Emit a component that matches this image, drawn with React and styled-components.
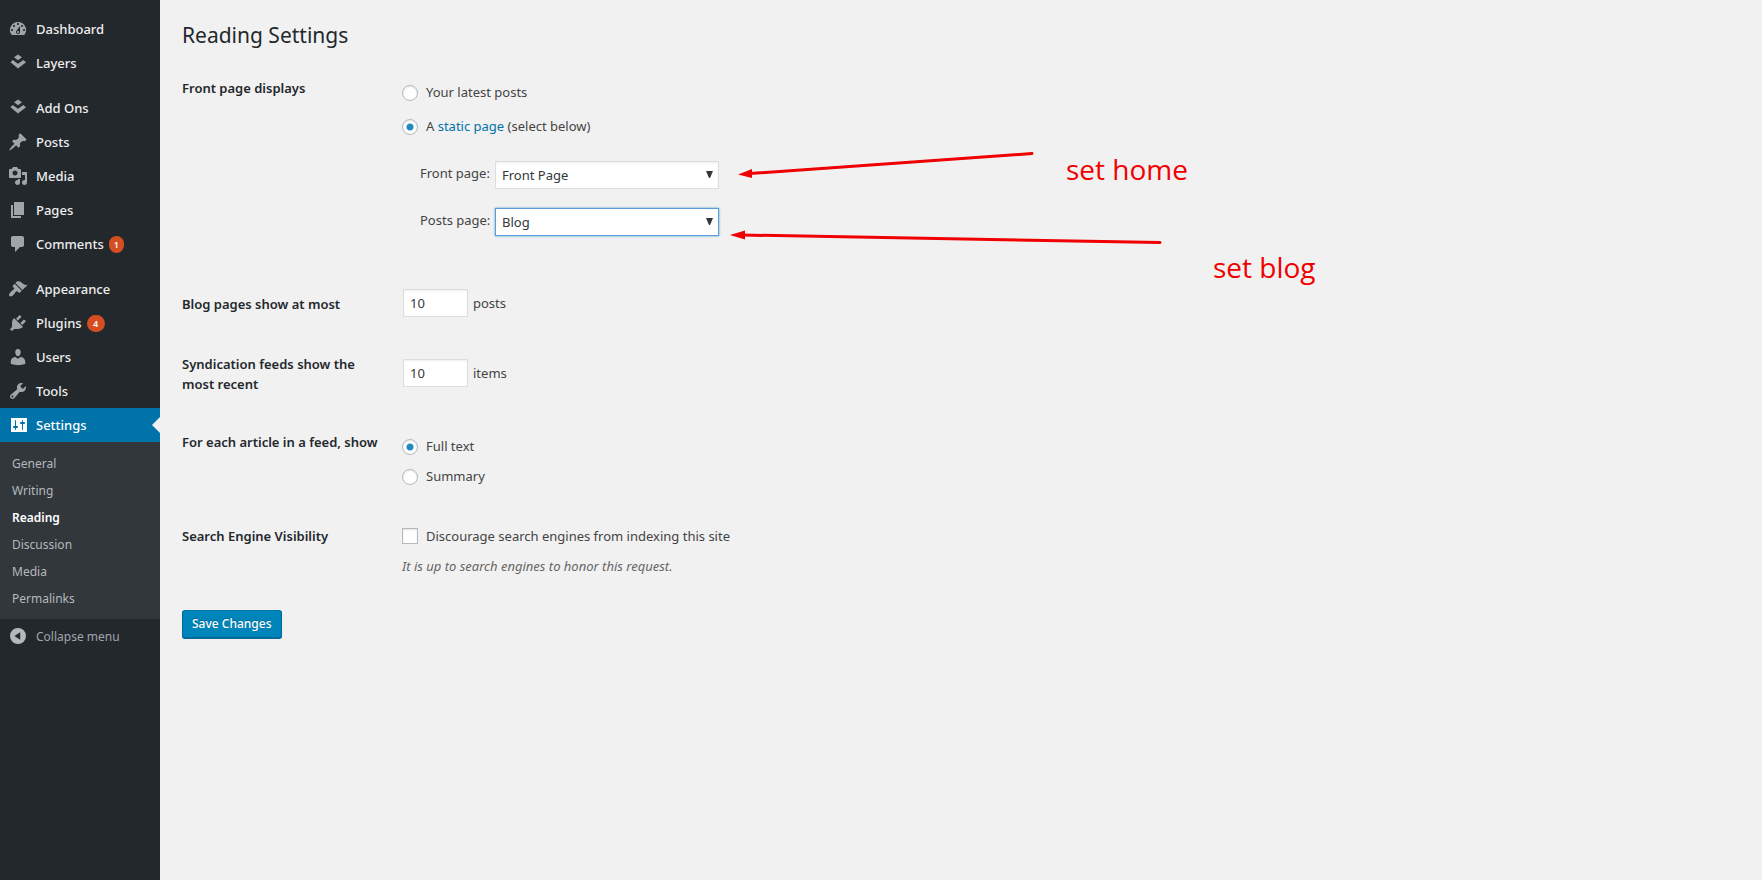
import React, { useState } from "react";
import styled, { createGlobalStyle, css } from "styled-components";

const Global = createGlobalStyle`
  *, *::before, *::after { box-sizing: border-box; }
  body {
    margin: 0;
    background: #f1f1f1;
    color: #444;
    font-family: "Noto Sans", "Open Sans", sans-serif;
    font-size: 13px;
    line-height: 18px;
  }
`;

const ICONS = {
  dashboard: "M3.76 16h12.48A7.998 7.998 0 0 0 10 3a7.998 7.998 0 0 0-6.24 13zM10 4c.55 0 1 .45 1 1s-.45 1-1 1-1-.45-1-1 .45-1 1-1zM6 6c.55 0 1 .45 1 1s-.45 1-1 1-1-.45-1-1 .45-1 1-1zm8 0c.55 0 1 .45 1 1s-.45 1-1 1-1-.45-1-1 .45-1 1-1zm-5.37 5.55L12 7v6c0 1.1-.9 2-2 2s-2-.9-2-2c0-.57.24-1.08.63-1.45zM4 10c.55 0 1 .45 1 1s-.45 1-1 1-1-.45-1-1 .45-1 1-1zm12 0c.55 0 1 .45 1 1s-.45 1-1 1-1-.45-1-1 .45-1 1-1zm-5 3c0-.55-.45-1-1-1s-1 .45-1 1 .45 1 1 1 1-.45 1-1z",
  layers: "M10 1.5L14 4.3 10 7.2 6 4.3zM4.7 6.9L10 10.7 15.3 6.9 18 9.3 10 15.4 2.5 9.3z",
  post: "M10.44 3.02l1.82-1.82 6.36 6.35-1.83 1.82c-1.05-.68-2.48-.57-3.41.36l-.75.75c-.92.93-1.04 2.35-.35 3.41l-1.83 1.82-2.41-2.41-2.8 2.79c-.42.42-3.38 2.71-3.8 2.29s1.86-3.39 2.28-3.81l2.79-2.79L4.1 9.36l1.83-1.82c1.05.69 2.48.57 3.4-.36l.75-.75c.93-.92 1.05-2.35.36-3.41z",
  media: "M13 11V4c0-.55-.45-1-1-1h-1.67L9 1H5L3.67 3H2c-.55 0-1 .45-1 1v7c0 .55.45 1 1 1h10c.55 0 1-.45 1-1zM7 4.5c1.38 0 2.5 1.12 2.5 2.5S8.38 9.5 7 9.5 4.5 8.38 4.5 7 5.62 4.5 7 4.5zM14 6h5v10.5c0 1.38-1.12 2.5-2.5 2.5S14 17.88 14 16.5s1.12-2.5 2.5-2.5c.17 0 .34.02.5.05V9h-3V6zm-4 8.05V13h2v3.5c0 1.38-1.12 2.5-2.5 2.5S7 17.88 7 16.5 8.12 14 9.5 14c.17 0 .34.02.5.05z",
  page: "M6 15V2h10v13H6zm-1 1h8v2H3V5h2v11z",
  comments: "M5 2h9c1.1 0 2 .9 2 2v7c0 1.1-.9 2-2 2h-2l-5 5v-5H5c-1.1 0-2-.9-2-2V4c0-1.1.9-2 2-2z",
  appearance: "M14.48 11.06L7.41 3.99l1.5-1.5c.5-.56 2.3-.47 3.51.32 1.21.8 1.43 1.28 2.91 2.1 1.18.64 2.45 1.26 4.45.85zm-.71.71L6.7 4.7 4.93 6.47c-.39.39-.39 1.02 0 1.41l1.06 1.06c.39.39.39 1.03 0 1.42-.6.6-1.43 1.11-2.21 1.69-.35.26-.7.53-1.01.84C1.43 14.23.4 16.08 1.4 17.07c.99 1 2.84-.03 4.18-1.36.31-.31.58-.66.85-1.02.57-.78 1.08-1.61 1.69-2.21.39-.39 1.02-.39 1.41 0l1.06 1.06c.39.39 1.02.39 1.41 0z",
  plugins: "M13.11 4.36L9.87 7.6 8 5.73l3.24-3.24c.35-.34 1.05-.2 1.56.32.52.51.66 1.21.31 1.55zm-8 1.77l.91-1.12 9.01 9.01-1.19.84c-.71.71-2.63 1.16-3.82 1.16H6.14L4.9 17.26c-.59.59-1.54.59-2.12 0-.59-.58-.59-1.53 0-2.12l1.24-1.24v-3.88c0-1.13.4-3.19 1.09-3.89zm7.26 3.97l3.24-3.24c.34-.35 1.04-.21 1.55.31.52.51.66 1.21.31 1.55l-3.24 3.25z",
  users: "M10 9.25c-2.27 0-2.73-3.44-2.73-3.44C7 4.02 7.82 2 9.97 2c2.16 0 2.98 2.02 2.71 3.81 0 0-.41 3.44-2.68 3.44zm0 2.57L12.72 10c2.39 0 4.52 2.33 4.52 4.53v2.49s-3.65 1.13-7.24 1.13c-3.65 0-7.24-1.13-7.24-1.13v-2.49c0-2.25 1.94-4.48 4.47-4.48z",
  tools: "M16.68 9.77c-1.34 1.34-3.3 1.67-4.95.99l-5.41 6.52c-.99.99-2.59.99-3.58 0s-.99-2.59 0-3.57l6.52-5.42c-.68-1.65-.35-3.61.99-4.95 1.28-1.28 3.12-1.62 4.72-1.06l-2.89 2.89 2.82 2.82 2.86-2.87c.53 1.58.18 3.39-1.08 4.65zM3.81 16.21c.4.39 1.04.39 1.43 0 .4-.4.4-1.04 0-1.43-.39-.4-1.03-.4-1.43 0-.39.39-.39 1.03 0 1.43z",
  settings: "M3 3H19V17H3zM8 11h1c.55 0 1 .45 1 1s-.45 1-1 1H8v1.5c0 .28-.22.5-.5.5s-.5-.22-.5-.5V13H6c-.55 0-1-.45-1-1s.45-1 1-1h1V5.5c0-.28.22-.5.5-.5s.5.22.5.5V11zm6-2h-1c-.55 0-1-.45-1-1s.45-1 1-1h1V5.500c0-.28.22-.5.5-.5s.5.22.5.5V7h1c.55 0 1 .45 1 1s-.45 1-1 1h-1v5.500c0 .28-.22.5-.5.5s-.5-.22-.5-.5V9z",
  collapse: "M10 2a8 8 0 1 1 0 16 8 8 0 0 1 0-16zM12.2 6.2L6.4 10l5.8 3.8z",
};

const MENU = [
  [
    { label: "Dashboard", icon: "dashboard" },
    { label: "Layers", icon: "layers" },
  ],
  [
    { label: "Add Ons", icon: "layers" },
    { label: "Posts", icon: "post" },
    { label: "Media", icon: "media" },
    { label: "Pages", icon: "page" },
    { label: "Comments", icon: "comments", count: 1 },
  ],
  [
    { label: "Appearance", icon: "appearance" },
    { label: "Plugins", icon: "plugins", count: 4 },
    { label: "Users", icon: "users" },
    { label: "Tools", icon: "tools" },
    { label: "Settings", icon: "settings", current: true },
  ],
];

const SUBMENU = ["General", "Writing", "Reading", "Discussion", "Media", "Permalinks"];

const Page = styled.div`
  display: flex;
  min-height: 100vh;
`;

const Sidebar = styled.nav`
  flex: 0 0 160px;
  padding-top: 12px;
  background: #23282d;
`;

const MenuGroup = styled.ul`
  margin: 0 0 11px;
  padding: 0;
  list-style: none;
  &:last-of-type { margin-bottom: 0; }
`;

const itemRow = css`
  display: flex;
  align-items: center;
  gap: 8px;
  width: 100%;
  height: 34px;
  padding: 0 8px;
`;

const MenuLink = styled.a`
  ${itemRow}
  position: relative;
  color: ${(p) => (p.$current ? "#fff" : "#eee")};
  background: ${(p) => (p.$current ? "#0073aa" : "transparent")};
  font-size: 13px;
  font-weight: 500;
  text-decoration: none;
  svg { fill: ${(p) => (p.$current ? "#fff" : "#a0a5aa")}; }
  ${(p) => p.$current && css`
    &::after {
      content: "";
      position: absolute;
      right: 0;
      top: 9px;
      border: 8px solid transparent;
      border-left: 0;
      border-right-color: #f1f1f1;
    }
  `}
`;

const CollapseButton = styled.button`
  ${itemRow}
  border: 0;
  background: none;
  color: #a0a5aa;
  font-family: inherit;
  font-size: 12px;
  svg { fill: #b4b9be; }
`;

const IconSvg = styled.svg`
  flex: none;
  width: 20px;
  height: 20px;
`;

const Count = styled.span`
  min-width: ${(p) => (p.$wide ? "18px" : "15px")};
  height: 17px;
  margin-left: -3px;
  padding: 0 5px;
  border-radius: 10px;
  background: #d54e21;
  color: #fff;
  font-size: 9px;
  font-weight: 600;
  line-height: 17px;
  text-align: center;
`;

const Submenu = styled.ul`
  margin: 0;
  padding: 8px 0 7px;
  background: #32373c;
  list-style: none;
`;

const SubmenuLink = styled.a`
  display: block;
  padding: 0 12px;
  color: ${(p) => (p.$current ? "#fff" : "#b4b9be")};
  font-size: 12px;
  font-weight: ${(p) => (p.$current ? 600 : 400)};
  line-height: 27px;
  text-decoration: none;
`;

const Main = styled.main`
  position: relative;
  flex: 1;
  min-width: 0;
  padding: 20px 22px;
`;

const Title = styled.h1`
  margin: 0 0 8px;
  color: #23282d;
  font-size: 21px;
  font-weight: 400;
  line-height: 30px;
`;

const Row = styled.div`
  display: grid;
  grid-template-columns: 200px minmax(0, 1fr);
  column-gap: 20px;
  min-height: ${(p) => p.$height}px;
`;

const Heading = styled.div`
  padding-top: 20px;
  color: #23282d;
  font-weight: 600;
  line-height: 20px;
`;

const Field = styled.div`
  display: flex;
  flex-direction: column;
  gap: ${(p) => p.$gap || 0}px;
  padding-top: ${(p) => p.$top}px;
`;

const Inline = styled.div`
  display: flex;
  align-items: center;
  gap: 5px;
`;

const Choice = styled.label`
  display: flex;
  align-items: center;
  gap: 8px;
  height: 18px;
`;

const Text = styled.span`
  a { color: #0073aa; text-decoration: none; }
`;

const mark = css`
  appearance: none;
  flex: none;
  width: 16px;
  height: 16px;
  border: 1px solid #b4b9be;
  background: #fff;
  box-shadow: inset 0 1px 2px rgba(0, 0, 0, 0.1);
`;

const Radio = styled.input.attrs({ type: "radio" })`
  ${mark}
  margin: 2px 0 0;
  border-radius: 50%;
  &:checked { background: radial-gradient(circle, #1e8cbe 0 3px, #fff 4px); }
`;

const Checkbox = styled.input.attrs({ type: "checkbox" })`
  ${mark}
  margin: 0;
  &:checked { background: #1e8cbe; }
`;

const PageChoices = styled.div`
  display: grid;
  grid-template-columns: 75px 224px;
  row-gap: 19px;
  padding: 10px 0 0 18px;
  label { line-height: 24px; white-space: nowrap; }
`;

const SelectBox = styled.div`
  position: relative;
  height: 28px;
  svg {
    position: absolute;
    right: 6px;
    top: 10px;
    width: 7px;
    height: 7px;
    fill: #32373c;
    pointer-events: none;
  }
`;

const Select = styled.select`
  appearance: none;
  display: block;
  width: 100%;
  height: 28px;
  padding: 0 20px 0 6px;
  border: 1px solid ${(p) => (p.$active ? "#5b9dd9" : "#ddd")};
  border-radius: 0;
  outline: 0;
  background: #fff;
  box-shadow: ${(p) => (p.$active ? "0 0 2px rgba(30, 140, 190, 0.8)" : "inset 0 1px 2px rgba(0, 0, 0, 0.07)")};
  color: #32373c;
  font: inherit;
`;

const NumberInput = styled.input`
  width: 65px;
  height: 28px;
  margin-left: 1px;
  padding: 0 6px;
  border: 1px solid #ddd;
  background: #fff;
  box-shadow: inset 0 1px 2px rgba(0, 0, 0, 0.07);
  color: #32373c;
  font: inherit;
`;

const Description = styled.p`
  margin: 0;
  color: #666;
  font-style: italic;
`;

const SaveButton = styled.button`
  height: 28px;
  padding: 0 9px;
  border: 1px solid;
  border-color: #0073aa #006799 #006799;
  border-radius: 3px;
  background: #0085ba;
  box-shadow: 0 1px 0 #006799;
  color: #fff;
  font: inherit;
  font-size: 12px;
  font-weight: 500;
  text-shadow: 0 -1px 1px #006799;
  white-space: nowrap;
`;

const Arrows = styled.svg`
  position: absolute;
  left: 560px;
  top: 140px;
  width: 460px;
  height: 120px;
  pointer-events: none;
`;

const Note = styled.span`
  position: absolute;
  left: ${(p) => p.$x}px;
  top: ${(p) => p.$y}px;
  color: #f00000;
  font-family: "Open Sans", "Noto Sans", sans-serif;
  font-size: 28px;
  line-height: 36px;
  white-space: nowrap;
`;

function Icon({ name }) {
  return (
    <IconSvg viewBox="0 0 20 20" aria-hidden="true">
      <path fillRule="evenodd" d={ICONS[name]} />
    </IconSvg>
  );
}

function PageSelect({ id, label, options, active }) {
  return (
    <>
      <label htmlFor={id}>{label}</label>
      <SelectBox>
        <Select id={id} $active={active} defaultValue={options[0]}>
          {options.map((o) => <option key={o}>{o}</option>)}
        </Select>
        <svg viewBox="0 0 7 7" aria-hidden="true"><path d="M0 0h7L4 7H3z" /></svg>
      </SelectBox>
    </>
  );
}

function CountField({ id, heading, unit, height, top }) {
  const [value, setValue] = useState("10");
  return (
    <Row $height={height}>
      <Heading as="label" htmlFor={id}>{heading}</Heading>
      <Field $top={top}>
        <Inline>
          <NumberInput id={id} value={value} onChange={(e) => setValue(e.target.value)} />
          <span>{unit}</span>
        </Inline>
      </Field>
    </Row>
  );
}

export default function App() {
  return (
    <Page>
      <Global />
      <Sidebar>
        {MENU.map((group, i) => (
          <MenuGroup key={i}>
            {group.map((item) => (
              <li key={item.label}>
                <MenuLink href="#" $current={item.current}>
                  <Icon name={item.icon} />
                  <span>{item.label}</span>
                  {item.count && <Count $wide={item.count > 1}>{item.count}</Count>}
                </MenuLink>
                {item.current && (
                  <Submenu>
                    {SUBMENU.map((s) => (
                      <li key={s}><SubmenuLink href="#" $current={s === "Reading"}>{s}</SubmenuLink></li>
                    ))}
                  </Submenu>
                )}
              </li>
            ))}
          </MenuGroup>
        ))}
        <CollapseButton type="button">
          <Icon name="collapse" />
          <span>Collapse menu</span>
        </CollapseButton>
      </Sidebar>

      <Main>
        <Title>Reading Settings</Title>
        <form onSubmit={(e) => e.preventDefault()}>
          <Row $height={216} role="group" aria-label="Front page displays">
            <Heading>Front page displays</Heading>
            <Field $top={25} $gap={16}>
              <Choice><Radio name="front" /><Text>Your latest posts</Text></Choice>
              <Choice><Radio name="front" defaultChecked /><Text>A <a href="#">static page</a> (select below)</Text></Choice>
              <PageChoices>
                <PageSelect id="page-front" label="Front page:" options={["Front Page", "Blog"]} />
                <PageSelect id="page-posts" label="Posts page:" options={["Blog", "Front Page"]} active />
              </PageChoices>
            </Field>
          </Row>
          <CountField id="posts" heading="Blog pages show at most" unit="posts" height={60} top={15} />
          <CountField id="items" heading="Syndication feeds show the most recent" unit="items" height={78} top={25} />
          <Row $height={94} role="group" aria-label="For each article in a feed, show">
            <Heading>For each article in a feed, show</Heading>
            <Field $top={25} $gap={12}>
              <Choice><Radio name="feed" defaultChecked /><Text>Full text</Text></Choice>
              <Choice><Radio name="feed" /><Text>Summary</Text></Choice>
            </Field>
          </Row>
          <Row $height={104}>
            <Heading>Search Engine Visibility</Heading>
            <Field $top={21} $gap={12}>
              <Choice><Checkbox /><Text>Discourage search engines from indexing this site</Text></Choice>
              <Description>It is up to search engines to honor this request.</Description>
            </Field>
          </Row>
          <SaveButton type="submit">Save Changes</SaveButton>
        </form>

        <Arrows viewBox="720 140 460 120" fill="#f00000" stroke="#f00000" aria-hidden="true">
          <path d="M750 173.500L1032 153.500M742 235L1160 242.500" strokeWidth="3" strokeLinecap="round" />
          <path d="M738 174.500L752 169V178zM730 235L745 230.500V239.500z" stroke="none" />
        </Arrows>
        <Note $x={906} $y={151}>set home</Note>
        <Note $x={1053} $y={249}>set blog</Note>
      </Main>
    </Page>
  );
}
